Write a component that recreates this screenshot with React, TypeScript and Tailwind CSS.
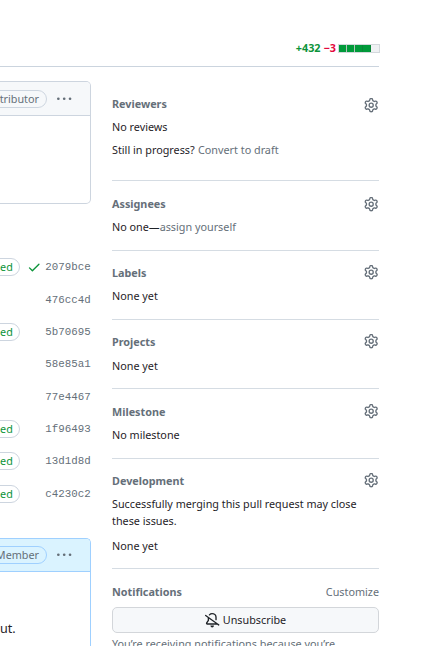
import type { ReactNode } from 'react';

const paths = {
  gear: 'M8 0a8.2 8.2 0 0 1 .701.031C9.444.095 9.99.645 10.16 1.29l.288 1.107c.018.066.079.158.212.224.231.114.454.243.668.386.123.082.233.09.299.071l1.103-.303c.644-.176 1.392.021 1.82.63.27.385.506.792.704 1.218.315.675.111 1.422-.364 1.891l-.814.806c-.049.048-.098.147-.088.294.016.257.016.515 0 .772-.01.147.038.246.088.294l.814.806c.475.469.679 1.216.364 1.891a7.977 7.977 0 0 1-.704 1.217c-.428.61-1.176.807-1.82.63l-1.102-.302c-.067-.019-.177-.011-.3.071a5.909 5.909 0 0 1-.668.386c-.133.066-.194.158-.211.224l-.29 1.106c-.168.646-.715 1.196-1.458 1.26a8.006 8.006 0 0 1-1.402 0c-.743-.064-1.289-.614-1.458-1.26l-.289-1.106c-.018-.066-.079-.158-.212-.224a5.738 5.738 0 0 1-.668-.386c-.123-.082-.233-.09-.299-.071l-1.103.303c-.644.176-1.392-.021-1.82-.63a8.12 8.12 0 0 1-.704-1.218c-.315-.675-.111-1.422.363-1.891l.815-.806c.05-.048.098-.147.088-.294a6.214 6.214 0 0 1 0-.772c.01-.147-.038-.246-.088-.294l-.815-.806C.635 6.045.431 5.298.746 4.623a7.92 7.92 0 0 1 .704-1.217c.428-.61 1.176-.807 1.82-.63l1.102.302c.067.019.177.011.3-.071.214-.143.437-.272.668-.386.133-.066.194-.158.211-.224l.29-1.106C6.009.645 6.556.095 7.299.03 7.53.01 7.764 0 8 0Zm-.571 1.525c-.036.003-.108.036-.137.146l-.289 1.105c-.147.561-.549.967-.998 1.189-.173.086-.34.183-.5.29-.417.278-.97.423-1.529.27l-1.103-.303c-.109-.03-.175.016-.195.045-.22.312-.412.644-.573.99-.014.031-.021.11.059.19l.815.806c.411.406.562.957.53 1.456a4.709 4.709 0 0 0 0 .582c.032.499-.119 1.05-.53 1.456l-.815.806c-.081.08-.073.159-.059.19.162.346.353.677.573.989.02.03.085.076.195.046l1.102-.303c.56-.153 1.113-.008 1.53.27.161.107.328.204.501.29.447.222.85.629.997 1.189l.289 1.105c.029.109.101.143.137.146a6.6 6.6 0 0 0 1.142 0c.036-.003.108-.036.137-.146l.289-1.105c.147-.561.549-.967.998-1.189.173-.086.34-.183.5-.29.417-.278.97-.423 1.529-.27l1.103.303c.109.029.175-.016.195-.045.22-.313.411-.644.573-.99.014-.031.021-.11-.059-.19l-.815-.806c-.411-.406-.562-.957-.53-1.456a4.709 4.709 0 0 0 0-.582c-.032-.499.119-1.05.53-1.456l.815-.806c.081-.08.073-.159.059-.19a6.464 6.464 0 0 0-.573-.989c-.02-.03-.085-.076-.195-.046l-1.102.303c-.56.153-1.113.008-1.53-.27a4.44 4.44 0 0 0-.501-.29c-.447-.222-.85-.629-.997-1.189l-.289-1.105c-.029-.11-.101-.143-.137-.146a6.6 6.6 0 0 0-1.142 0ZM11 8a3 3 0 1 1-6 0 3 3 0 0 1 6 0ZM9.5 8a1.5 1.5 0 1 0-3.001.001A1.5 1.5 0 0 0 9.5 8Z',
  check: 'M13.78 4.22a.75.75 0 0 1 0 1.06l-7.25 7.25a.75.75 0 0 1-1.06 0L2.22 9.28a.751.751 0 0 1 .018-1.042.751.751 0 0 1 1.042-.018L6 10.94l6.72-6.72a.75.75 0 0 1 1.06 0Z',
  kebab: 'M8 9a1.5 1.5 0 1 0 0-3 1.5 1.5 0 0 0 0 3ZM1.5 9a1.5 1.5 0 1 0 0-3 1.5 1.5 0 0 0 0 3Zm13 0a1.5 1.5 0 1 0 0-3 1.5 1.5 0 0 0 0 3Z',
  bellSlash: 'm4.182 4.31.016.011 10.104 7.316.013.01 1.375.996a.75.75 0 1 1-.88 1.214L13.626 13H2.518a1.516 1.516 0 0 1-1.263-2.36l1.703-2.554A.255.255 0 0 0 3 7.947V5.305L.31 3.357a.75.75 0 1 1 .88-1.214Zm7.373 7.19L4.5 6.391v1.556c0 .346-.102.683-.294.97l-1.703 2.556a.017.017 0 0 0-.003.01c0 .005.002.009.005.012l.006.004.007.001ZM8 1.5c-.997 0-1.895.416-2.534 1.086A.75.75 0 1 1 4.38 1.55 5 5 0 0 1 13 5v2.373a.75.75 0 0 1-1.5 0V5A3.5 3.5 0 0 0 8 1.5ZM8 16a2 2 0 0 1-1.985-1.75c-.017-.137.097-.25.235-.25h3.5c.138 0 .252.113.235.25A2 2 0 0 1 8 16Z',
};

function Icon({ name, className = '' }: { name: keyof typeof paths; className?: string }) {
  return (
    <svg viewBox="0 0 16 16" fill="currentColor" className={`size-[14.4px] shrink-0 overflow-visible ${className}`}>
      <path d={paths[name]} />
    </svg>
  );
}

const commits = [
  { sha: '2079bce', verified: true, passed: true },
  { sha: '476cc4d', verified: false },
  { sha: '5b70695', verified: true },
  { sha: '58e85a1', verified: false },
  { sha: '77e4467', verified: false },
  { sha: '1f96493', verified: true },
  { sha: '13d1d8d', verified: true },
  { sha: 'c4230c2', verified: true },
];

function Section({
  title,
  className,
  gear = '',
  children,
}: {
  title: string;
  className: string;
  gear?: string;
  children: ReactNode;
}) {
  return (
    <section className={`border-b border-[#d5dce3] ${className}`}>
      <div className="mb-[7px] flex h-4 items-center justify-between">
        <h3 className="font-bold text-[#656f79]">{title}</h3>
        <Icon name="gear" className={`mr-[0.6px] text-[#656f79] ${gear}`} />
      </div>
      {children}
    </section>
  );
}

function CommentHeader({ label, className }: { label: string; className: string }) {
  return (
    <div className={`flex items-center justify-end border-b pr-[18.6px] text-[#656f79] ${className}`}>
      <span className="mr-[10px] flex h-[18px] items-center rounded-full border border-inherit px-[7px]">{label}</span>
      <Icon name="kebab" className="mt-[1px]" />
    </div>
  );
}

export default function App() {
  return (
    <div className="h-[646px] w-[434px] overflow-hidden bg-white font-['Noto_Sans',sans-serif] text-[10.8px] leading-[16px] text-[#1f2328]">
      <header className="flex h-[67px] w-[380px] items-end justify-end pb-[11px] font-bold">
        <span className="text-[#0c943a]">+432</span>
        <span className="ml-[3px] text-[#e3083c]">−3</span>
        <div className="mb-[3px] ml-[2px] flex border border-r-0 border-[#d3d8dc]">
          {['border-[#b4c4ba]', 'border-[#b4c4ba]', 'border-[#0b8537]', 'border-[#0b8537]'].map((edge, n) => (
            <span key={n} className={`h-[7px] w-[8px] border-r bg-[#009a3a] ${edge}`} />
          ))}
          <span className="h-[7px] w-[9px] border-r border-[#d3d8dc] bg-[#eff1f3]" />
        </div>
      </header>
      <div className="-mt-px w-[379px] border-t border-[#cbd4de]" />
      <div className="flex">
        <main className="w-[91px] shrink-0">
          <div className="mt-[14px] h-[123px] overflow-hidden rounded-r-[5px] border border-l-0 border-[#cdd5df]">
            <CommentHeader label="Contributor" className="h-[34px] border-[#cdd5df] bg-[#f6f8fa]" />
          </div>
          <div className="mt-[47px]">
            {commits.map((c) => (
              <div key={c.sha} className="flex h-[32.35px] items-center justify-end">
                {c.verified && (
                  <span className="flex h-[18px] items-center rounded-full border border-[#cdd5df] px-[6px] text-[#0c943a]">
                    Verified
                  </span>
                )}
                <span className="ml-[7px] flex w-[18.5px] shrink-0 justify-start">
                  {c.passed && <Icon name="check" className="text-[#0c943a]" />}
                </span>
                <code className="mr-[0.3px] font-['Liberation_Mono',monospace] text-[#656f79]">{c.sha}</code>
              </div>
            ))}
          </div>
          <div className="mt-[28px] h-[120px] overflow-hidden rounded-tr-[5px] border-t border-r border-[#9fd0ff]">
            <CommentHeader label="Member" className="h-[33px] border-[#9fd0ff] bg-[#daf3ff]" />
            <p className="mt-[47px] w-[15px] text-right text-[12.6px] leading-[19px]">ut.</p>
          </div>
        </main>
        <aside className="ml-[21px] w-[267px] shrink-0">
          <Section title="Reviewers" className="h-[114px] pt-[29px]" gear="mt-[2px]">
            <p>No reviews</p>
            <p className="mt-[7px]">
              Still in progress? <span className="ml-[0.5px] text-[#656f79]">Convert to draft</span>
            </p>
          </Section>
          <Section title="Assignees" className="h-[70px] pt-[15px]" gear="mt-[1px]">
            <p>
              No one—<span className="text-[#656f79]">assign yourself</span>
            </p>
          </Section>
          <Section title="Labels" className="h-[69px] pt-[14px]" gear="-mt-[2px]">
            <p>None yet</p>
          </Section>
          <Section title="Projects" className="h-[69px] pt-[14px]" gear="-mt-[1px]">
            <p className="pt-px">None yet</p>
          </Section>
          <Section title="Milestone" className="h-[70px] pt-[15px]" gear="-mt-[2px]">
            <p>No milestone</p>
          </Section>
          <Section title="Development" className="h-[110px] pt-[14px]" gear="-mt-[2px]">
            <p className="-mt-px leading-[17px]">Successfully merging this pull request may close these issues.</p>
            <p className="mt-[9px]">None yet</p>
          </Section>
          <section className="pt-[15px]">
            <div className="flex justify-between text-[#656f79]">
              <h3 className="font-bold">Notifications</h3>
              <span>Customize</span>
            </div>
            <button className="mt-[7px] flex h-[26px] w-full items-center justify-center gap-[3.6px] rounded-[5px] border border-[#d3d6da] bg-[#f6f8fa]">
              <Icon name="bellSlash" />
              Unsubscribe
            </button>
            <p className="mt-[3px] text-[#656f79]">You’re receiving notifications because you’re</p>
          </section>
        </aside>
      </div>
    </div>
  );
}
